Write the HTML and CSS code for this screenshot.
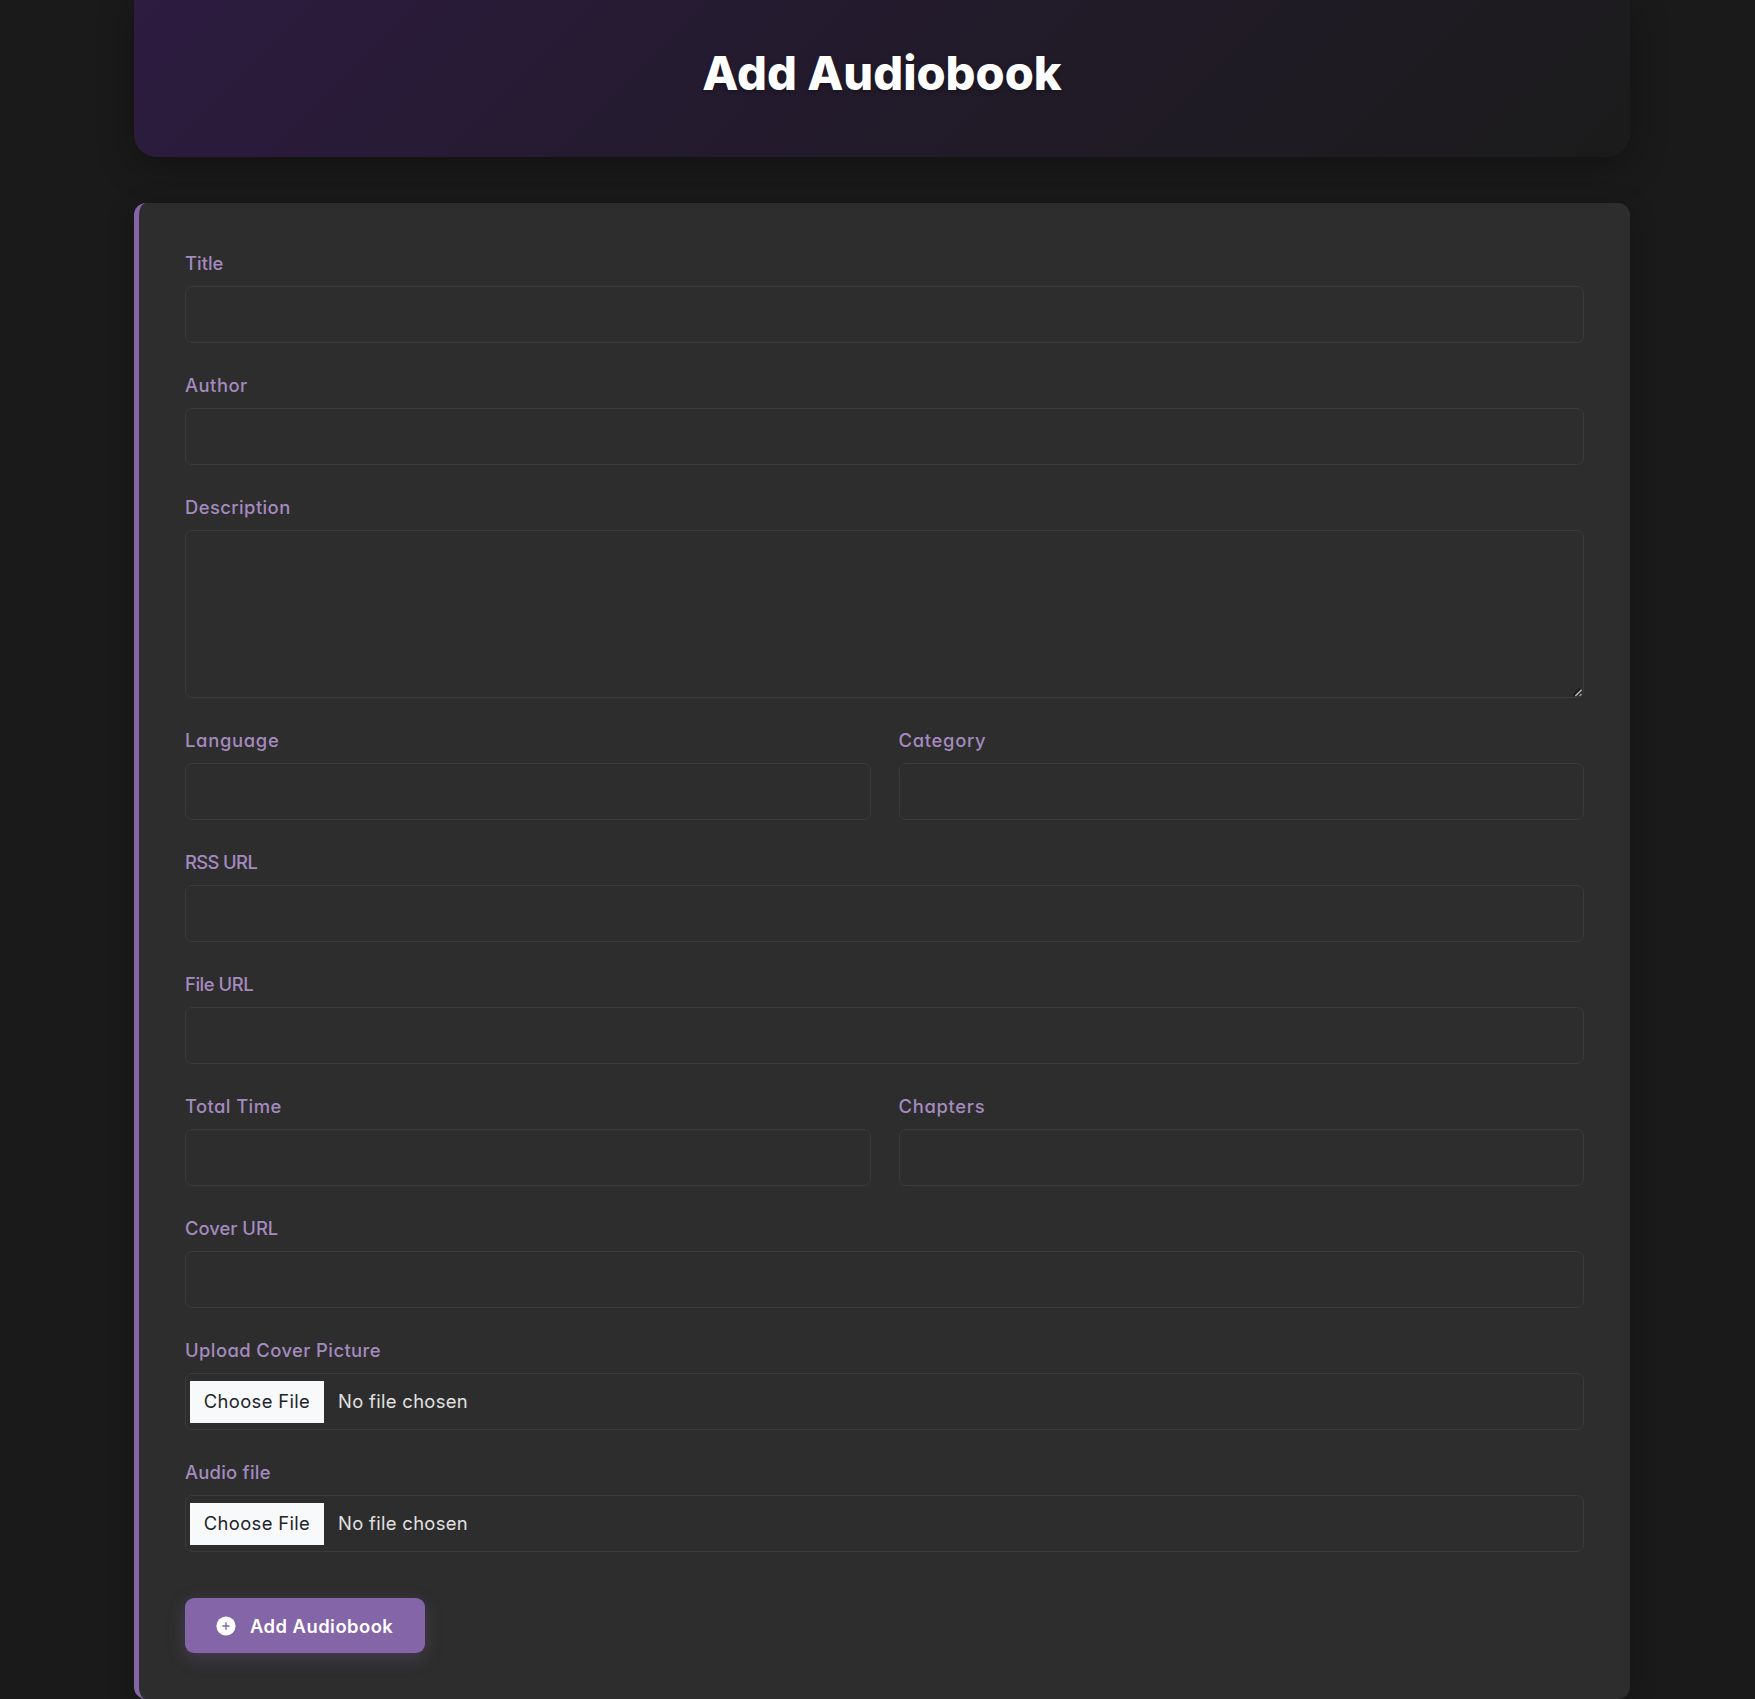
FILE: index.html
```
<!DOCTYPE html>
<html lang="en">
<head>
<meta charset="utf-8">
<title>Add Audiobook</title>
<link rel="stylesheet" href="styles.css">
</head>
<body>
<main class="container">
  <header class="hero"><h1 class="hero-title">Add Audiobook</h1></header>
  <form class="card">
    <div class="field"><label class="label track-xs" for="title">Title</label><input class="control" id="title" type="text"></div>
    <div class="field"><label class="label track-lg" for="author">Author</label><input class="control" id="author" type="text"></div>
    <div class="field">
      <label class="label" for="description">Description</label>
      <div class="area-wrap">
        <textarea class="control area" id="description"></textarea>
        <svg class="grip" viewBox="0 0 10 10" aria-hidden="true"><path d="M1 8.5 7.500 2" stroke="#111" stroke-width="2.400"/><path d="M2.300 9 8.500 2.800" stroke="#bbb" stroke-width="1.500"/><path d="M6.500 9 8.500 7" stroke="#999" stroke-width="1.300"/></svg>
      </div>
    </div>
    <div class="row">
      <div class="field"><label class="label track-xl" for="language">Language</label><input class="control" id="language" type="text"></div>
      <div class="field"><label class="label track-xl" for="category">Category</label><input class="control" id="category" type="text"></div>
    </div>
    <div class="field"><label class="label track-tight" for="rss">RSS URL</label><input class="control" id="rss" type="text"></div>
    <div class="field"><label class="label track-snug" for="file-url">File URL</label><input class="control" id="file-url" type="text"></div>
    <div class="row">
      <div class="field"><label class="label" for="time">Total Time</label><input class="control" id="time" type="text"></div>
      <div class="field"><label class="label track-xl" for="chapters">Chapters</label><input class="control" id="chapters" type="text"></div>
    </div>
    <div class="field"><label class="label track-xs" for="cover-url">Cover URL</label><input class="control" id="cover-url" type="text"></div>
    <div class="field"><span class="label">Upload Cover Picture</span><div class="control file"><button class="file-button" type="button">Choose File</button><span class="file-name">No file chosen</span></div></div>
    <div class="field"><span class="label track-md">Audio file</span><div class="control file"><button class="file-button" type="button">Choose File</button><span class="file-name">No file chosen</span></div></div>
    <button class="submit" type="button">
      <svg class="submit-icon" viewBox="0 0 20 20" aria-hidden="true"><circle cx="10" cy="10" r="9.600" fill="#fff"/><path d="M10 6.800v6.400M6.800 10h6.400" stroke="#8465a7" stroke-width="1.400" stroke-linecap="round"/></svg>
      <span>Add Audiobook</span>
    </button>
  </form>
</main>
</body>
</html>
```
FILE: styles.css
```
* { box-sizing: border-box; }
html { background: #1a1a1a; }
body {
  margin: 0;
  background: #1a1a1a;
  color: #e0e0e0;
  font-family: Inter, "Open Sans", sans-serif;
  font-feature-settings: "cv11";
  font-size: 18.4px;
  overflow: hidden;
}
.container { width: 1496px; margin-left: 134px; }
.hero {
  display: flex;
  justify-content: center;
  height: 157px;
  padding-top: 36px;
  border-radius: 0 0 23px 23px;
  background: linear-gradient(135deg, #2d1b40 0%, #231b2d 45%, #1b1b1b 100%);
  box-shadow: 0 9px 37px rgba(0, 0, 0, .3);
}
.hero-title {
  margin: 0;
  color: #fff;
  font-size: 47px;
  font-weight: 800;
  line-height: 74px;
  text-shadow: 0 2px 5px rgba(0, 0, 0, .3);
}
.card {
  display: flex;
  flex-direction: column;
  height: 1496px;
  margin-top: 46px;
  padding: 46px;
  border-left: 5px solid #8465a7;
  border-radius: 12px;
  background: #2d2d2d;
  box-shadow: 0 5px 28px rgba(0, 0, 0, .2);
}
.field { margin-bottom: 28px; }
.row { display: grid; grid-template-columns: 1fr 1fr; gap: 28px; }
.label {
  display: block;
  height: 28px;
  margin-bottom: 9px;
  color: #a48abf;
  font-weight: 500;
  letter-spacing: .42px;
  line-height: 28px;
}
.track-tight { letter-spacing: -.62px; }
.track-snug { letter-spacing: -.45px; }
.track-xs { letter-spacing: 0; }
.track-md { letter-spacing: .25px; }
.track-lg { letter-spacing: .5px; }
.track-xl { letter-spacing: .7px; }
.control {
  display: block;
  width: 100%;
  height: 57px;
  padding: 14px 18px;
  border: 1px solid #3b3b3b;
  border-radius: 7px;
  background: #2d2d2d;
  color: #e0e0e0;
  font: inherit;
}
.area-wrap { position: relative; }
.area { height: 168px; resize: none; }
.grip { position: absolute; right: 1px; bottom: 1px; width: 10px; height: 10px; }
.file { display: flex; align-items: center; gap: 14px; padding: 0 4px; }
.file-button {
  width: 134px;
  height: 42px;
  padding: 0 0 2px;
  border: 0;
  background: #f8f9fa;
  color: #212529;
  font: inherit;
  letter-spacing: .36px;
}
.file-name { padding-bottom: 2px; letter-spacing: .33px; }
.submit {
  display: flex;
  align-items: center;
  gap: 14px;
  width: 240px;
  height: 56px;
  margin-top: 18px;
  padding: 1px 31px 0;
  border: 0;
  border-radius: 9px;
  background: #8465a7;
  color: #fff;
  font: inherit;
  font-weight: 600;
  letter-spacing: .47px;
  white-space: nowrap;
  box-shadow: 0 5px 18px rgba(132, 101, 167, .3);
}
.submit-icon { flex: none; width: 20px; height: 20px; }
```
